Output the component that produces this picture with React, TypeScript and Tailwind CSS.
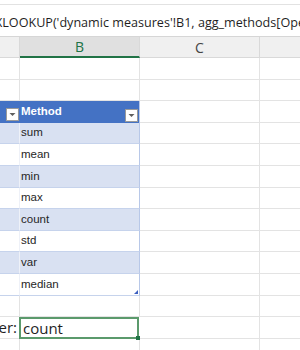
import React from "react";

const GRID = "border-[#e3e3e3]";
const METHODS = ["sum", "mean", "min", "max", "count", "std", "var", "median"];

function FilterButton() {
  return (
    <div className="w-[13px] h-[13px] bg-white border border-[#9a9a9a] flex items-center justify-center">
      <svg width="7" height="5" viewBox="0 0 7 5">
        <path d="M0.5 1 H6.5 L3.5 4 Z" fill="#5f5f5f" />
      </svg>
    </div>
  );
}

// plain empty worksheet row
function EmptyRow() {
  return (
    <div className="flex h-[21.6px]">
      <div className={`w-[20px] border-r border-b ${GRID}`} />
      <div className={`w-[120px] border-r border-b ${GRID}`} />
      <div className={`w-[120px] border-r border-b ${GRID}`} />
      <div className={`flex-1 border-b ${GRID}`} />
    </div>
  );
}

function TableRow({ text, band, last }: { text: string; band: boolean; last?: boolean }) {
  const bg = band ? "bg-[#d9e1f2]" : "bg-white";
  return (
    <div className="flex h-[21.6px]">
      <div className={`w-[20px] border-r border-b border-r-[#eef1f8] border-b-[#c6d3ec] ${bg}`} />
      <div
        className={`w-[120px] border-r border-b border-r-[#b8c8e8] border-b-[#c6d3ec] ${bg} relative flex items-center pl-[1px] text-[11.5px] text-[#262626]`}
      >
        {text}
        {last && (
          <svg className="absolute right-[1px] bottom-[1px]" width="4" height="4" viewBox="0 0 4 4">
            <path d="M4 0 V4 H0 Z" fill="#3b5fc0" />
          </svg>
        )}
      </div>
      <div className={`w-[120px] border-r border-b ${GRID}`} />
      <div className={`flex-1 border-b ${GRID}`} />
    </div>
  );
}

export default function App() {
  return (
    <div className="w-[300px] h-[350px] overflow-hidden bg-white font-['Liberation_Sans',Arial,sans-serif]">
      {/* ribbon remnant */}
      <div className="h-[5px] border-b border-[#e2e2e2] bg-white" />

      {/* formula bar */}
      <div className="h-[32px] pt-[5px] border-b border-[#d6d6d6] flex items-center overflow-hidden whitespace-nowrap text-[12.6px] text-[#1f1f1f] font-['Open_Sans',sans-serif]">
        <span className="-ml-[5px]">
          XLOOKUP('dynamic measures'!B1, agg_methods[Operation], agg_methods[Method])
        </span>
      </div>

      {/* column headers */}
      <div className="flex h-[21px] bg-[#f0f0f0] text-[14px] font-['Open_Sans',sans-serif] text-[#444]">
        <div className="w-[20px] border-r border-b border-[#d9d9d9]" />
        <div className="w-[120px] bg-[#e0e0e0] border-r border-[#d9d9d9] border-b-2 border-b-[#217346] flex items-center justify-center text-[#217346]">
          B
        </div>
        <div className="w-[120px] border-r border-b border-[#d9d9d9] flex items-center justify-center">C</div>
        <div className="flex-1 border-b border-[#d9d9d9]" />
      </div>

      <EmptyRow />
      <EmptyRow />

      {/* table header */}
      <div className="flex h-[21.6px]">
        <div className="w-[20px] bg-[#4472c4] flex items-end justify-end pr-[1px] pb-[1px] border-b border-[#4472c4]">
          <FilterButton />
        </div>
        <div className="w-[120px] bg-[#4472c4] border-r border-[#b8c8e8] flex items-end justify-between pl-[1px] pr-[1px] pb-[1px] text-[11.5px] font-bold text-white">
          <span className="self-center">Method</span>
          <FilterButton />
        </div>
        <div className={`w-[120px] border-r border-b ${GRID}`} />
        <div className={`flex-1 border-b ${GRID}`} />
      </div>

      {METHODS.map((m, i) => (
        <TableRow key={m} text={m} band={i % 2 === 0} last={i === METHODS.length - 1} />
      ))}

      <EmptyRow />

      {/* input row */}
      <div className="flex h-[21.6px]">
        <div className={`w-[20px] border-r border-b ${GRID} overflow-hidden flex justify-end items-center`}>
          <span className="whitespace-nowrap text-[15px] text-[#1f1f1f] font-['Open_Sans',sans-serif] pr-[2px]">
            Method filter:
          </span>
        </div>
        <div className="w-[120px] relative border-2 border-[#5b9a6c] -ml-[1px] flex items-center pl-[2px] text-[15px] text-[#1f1f1f] font-['Open_Sans',sans-serif]">
          count
          <div className="absolute -right-[3px] -bottom-[3px] w-[4px] h-[4px] bg-[#217346]" />
        </div>
        <div className={`w-[121px] border-r border-b ${GRID}`} />
        <div className={`flex-1 border-b ${GRID}`} />
      </div>

      <EmptyRow />
    </div>
  );
}
